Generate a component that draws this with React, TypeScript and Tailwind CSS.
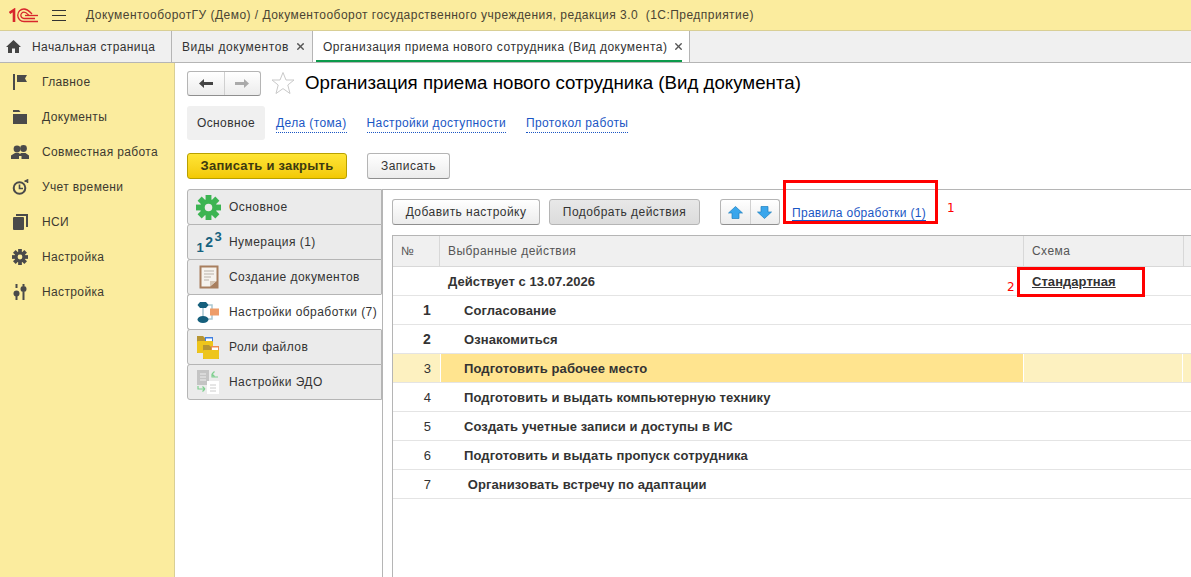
import { X } from 'lucide-react';

/* ── Icons ── */
function Logo1C() {
  return (
    <svg width="30" height="15" viewBox="0 0 30 15" fill="none" stroke="#d8262c">
      <path d="M0.5 5 L5 2 V14" strokeWidth="2.6" />
      <path d="M29 13.5 H15 A6 6 0 1 1 15 1 C19 1 20.5 3.5 23 6" strokeWidth="1.3" />
      <path d="M26 10.5 H15 A3 3 0 1 1 15 4.2 C17.5 4.2 18.5 6 20 7.5" strokeWidth="1.3" />
      <path d="M16 7.5 H29" strokeWidth="1.3" />
    </svg>
  );
}

function HomeIcon() {
  return (
    <svg width="15" height="13" viewBox="0 0 15 13" fill="#444">
      <path d="M7.5 0 L15 7 H13 V13 H9 V8.5 H6 V13 H2 V7 H0 Z" />
    </svg>
  );
}

function FlagIcon() {
  return (
    <svg width="16" height="16" viewBox="0 0 16 16" fill="#4a4a4a">
      <rect x="1" y="0" width="2" height="16" />
      <path d="M5 1 H15 L13 4.5 L15 8 H5 Z" />
    </svg>
  );
}

function FolderIcon() {
  return (
    <svg width="16" height="14" viewBox="0 0 16 14" fill="#4a4a4a">
      <path d="M1 0 H7 L8.5 2 H1 Z" />
      <path d="M1 4 H15 V14 H1 Z" />
    </svg>
  );
}

function PeopleIcon() {
  return (
    <svg width="18" height="14" viewBox="0 0 18 14" fill="#4a4a4a">
      <circle cx="6" cy="4" r="3.4" />
      <circle cx="12.5" cy="3.5" r="3.4" />
      <path d="M0 14 V10.5 L4 8 H8 L9 9 L10 8 H14.5 L18 10.5 V14 H10.5 V11 H8 V14 Z" />
    </svg>
  );
}

function TimerIcon() {
  return (
    <svg width="17" height="16" viewBox="0 0 17 16" fill="none" stroke="#4a4a4a">
      <circle cx="7.5" cy="9" r="5.8" strokeWidth="2" />
      <path d="M7.5 5.5 V9.5 H11" strokeWidth="1.6" />
      <path d="M12.5 2.5 L15.5 1 L15.5 4" strokeWidth="1.6" />
    </svg>
  );
}

function PagesIcon() {
  return (
    <svg width="15" height="16" viewBox="0 0 15 16" fill="#4a4a4a">
      <path d="M3 0 H15 V13 H13 V2 H3 Z" />
      <rect x="0" y="3" width="11" height="13" rx="1" />
    </svg>
  );
}

function GearIcon({ color = '#4a4a4a', hole = '#fbec9e', size = 16 }: { color?: string; hole?: string; size?: number }) {
  const teeth = [0, 45, 90, 135, 180, 225, 270, 315];
  return (
    <svg width={size} height={size} viewBox="0 0 24 24">
      {teeth.map((a) => (
        <rect key={a} x="9.2" y="0" width="5.6" height="7" fill={color} transform={`rotate(${a} 12 12)`} />
      ))}
      <circle cx="12" cy="12" r="8" fill={color} />
      <circle cx="12" cy="12" r="3.6" fill={hole} />
    </svg>
  );
}

function SlidersIcon() {
  return (
    <svg width="14" height="16" viewBox="0 0 14 16" fill="#4a4a4a">
      <rect x="2.5" y="0" width="2" height="4" />
      <circle cx="3.5" cy="9.5" r="3" />
      <rect x="2.5" y="12" width="2" height="4" />
      <rect x="9.5" y="0" width="2" height="2" />
      <circle cx="10.5" cy="5" r="3" />
      <rect x="9.5" y="8" width="2" height="8" />
    </svg>
  );
}

function NumberingIcon() {
  return (
    <span className="flex h-[24px] w-[24px] items-end font-['Liberation_Sans',sans-serif] font-bold leading-none text-[#17627f]">
      <span className="mr-[1px] text-[13px]">1</span>
      <span className="mb-[5px] mr-[1px] text-[14px]">2</span>
      <span className="mb-[11px] text-[13px]">3</span>
    </span>
  );
}

function DocIcon() {
  return (
    <svg width="20" height="24" viewBox="0 0 20 24">
      <rect x="0.5" y="0.5" width="19" height="23" fill="#a87f5f" />
      <path d="M2.5 2.5 H17.5 V16 L11 21.5 H2.5 Z" fill="#f6f3ee" />
      <path d="M11 21.5 L17.5 16 H11 Z" fill="#d4c5b5" />
      <path d="M5 6 H15 M5 9 H15 M5 12 H12 M5 15 H10" stroke="#b9b2a9" strokeWidth="1" />
    </svg>
  );
}

function FlowIcon() {
  return (
    <svg width="24" height="24" viewBox="0 0 24 24">
      <path d="M6 5 V19 M6 5 H15 V9 M6 19 H15 V15" stroke="#a9c8d2" strokeWidth="1.5" fill="none" />
      <path d="M0.5 5 L3 2 H9 L11.5 5 L9 8 H3 Z" fill="#155f7c" />
      <ellipse cx="6" cy="19.5" rx="5.5" ry="3.5" fill="#155f7c" />
      <rect x="13" y="8.5" width="9" height="7" fill="#ee9c68" />
    </svg>
  );
}

function FoldersIcon() {
  return (
    <svg width="24" height="24" viewBox="0 0 24 24">
      <path d="M0 1 H6 L8 3 H16 V18 H0 Z" fill="#b69532" />
      <rect x="8" y="2" width="8" height="5" fill="#3f7fe0" />
      <rect x="9" y="3.5" width="6" height="4" fill="#fff" />
      <rect x="0" y="6" width="16" height="12" rx="1" fill="#eec51c" />
      <path d="M6 10 H12 L14 12 H22 V24 H6 Z" fill="#b69532" />
      <rect x="14" y="11" width="8" height="5" fill="#ee8c50" />
      <rect x="15" y="12.5" width="6" height="4" fill="#fff" />
      <rect x="6" y="15" width="16" height="9" rx="1" fill="#eec51c" />
    </svg>
  );
}

function EdoIcon() {
  return (
    <svg width="24" height="24" viewBox="0 0 24 24">
      <rect x="0" y="0" width="12" height="15" fill="#c4c4c4" />
      <path d="M3 4 H9 M3 7 H9 M3 10 H9" stroke="#eee" />
      <rect x="10" y="11" width="12" height="13" fill="#fff" />
      <path d="M13 15 H19 M13 18 H19 M13 21 H19" stroke="#ccc" />
      <path d="M21 7 H15 V4 M15 4 L17.5 1.5 M15 4 L17.5 6.5" stroke="#7fcf8f" strokeWidth="1.2" fill="none" />
      <path d="M1 16 V19 H8 M8 19 L5.5 16.5 M8 19 L5.5 21.5" stroke="#7fcf8f" strokeWidth="1.2" fill="none" />
    </svg>
  );
}

function UpDownArrow({ down }: { down?: boolean }) {
  return (
    <svg width="15" height="13" viewBox="0 0 15 13" className={down ? 'rotate-180' : ''}>
      <path d="M7.5 0.5 L14.5 7 H11 V12.5 H4 V7 H0.5 Z" fill="#3aa6ec" stroke="#1c7fbe" strokeWidth="0.7" />
    </svg>
  );
}

function FatArrow({ color, flip }: { color: string; flip?: boolean }) {
  return (
    <svg width="14" height="9" viewBox="0 0 14 9" fill={color} className={flip ? 'rotate-180' : ''}>
      <path d="M0 4.5 L5 0 V3 H14 V6 H5 V9 Z" />
    </svg>
  );
}

function StarIcon() {
  return (
    <svg width="24" height="24" viewBox="0 0 24 24" fill="none" stroke="#c9c9c9" strokeWidth="1">
      <path d="M12 1.5 L15 9 H23 L16.8 14 L19 22.5 L12 17.6 L5 22.5 L7.2 14 L1 9 H9 Z" />
    </svg>
  );
}

/* ── Data ── */
const NAV_ITEMS = [
  { label: 'Главное', icon: <FlagIcon /> },
  { label: 'Документы', icon: <FolderIcon /> },
  { label: 'Совместная работа', icon: <PeopleIcon /> },
  { label: 'Учет времени', icon: <TimerIcon /> },
  { label: 'НСИ', icon: <PagesIcon /> },
  { label: 'Настройка', icon: <GearIcon /> },
  { label: 'Настройка', icon: <SlidersIcon /> },
];

const SIDE_TABS = [
  { label: 'Основное', icon: <GearIcon color="#3cb452" hole="#ebebeb" size={25} /> },
  { label: 'Нумерация (1)', icon: <NumberingIcon /> },
  { label: 'Создание документов', icon: <DocIcon /> },
  { label: 'Настройки обработки (7)', icon: <FlowIcon />, active: true },
  { label: 'Роли файлов', icon: <FoldersIcon /> },
  { label: 'Настройки ЭДО', icon: <EdoIcon /> },
];

const ROWS = [
  { n: '1', text: 'Согласование', strong: true },
  { n: '2', text: 'Ознакомиться', strong: true },
  { n: '3', text: 'Подготовить рабочее место', selected: true },
  { n: '4', text: 'Подготовить и выдать компьютерную технику' },
  { n: '5', text: 'Создать учетные записи и доступы в ИС' },
  { n: '6', text: 'Подготовить и выдать пропуск сотрудника' },
  { n: '7', text: ' Организовать встречу по адаптации' },
];

const BUTTON = 'flex items-center justify-center rounded-[3px] border border-[#b5b5b5] border-b-[#8f8f8f] bg-gradient-to-b from-white to-[#ececec] text-[#333]';

export default function App() {
  return (
    <div className="relative flex h-[577px] w-[1191px] flex-col overflow-hidden bg-white font-['Liberation_Sans',Arial,sans-serif] text-[12px] tracking-[0.45px] text-[#333]">
      {/* Title bar */}
      <div className="flex h-[31px] shrink-0 items-center border-b border-[#d9cf95] bg-[#fbec9e] pl-[9px]">
        <Logo1C />
        <div className="ml-[13px] flex w-[14px] flex-col gap-[4px]">
          <span className="h-px bg-[#333]" />
          <span className="h-px bg-[#333]" />
          <span className="h-px bg-[#333]" />
        </div>
        <span className="ml-[20px] whitespace-pre tracking-[0.47px] text-[#4a4433]">
          ДокументооборотГУ (Демо) / Документооборот государственного учреждения, редакция 3.0  (1С:Предприятие)
        </span>
      </div>

      {/* Open tabs */}
      <div className="flex h-[32px] shrink-0 border-b border-[#b5b5b5] bg-[#f0f0f0]">
        <div className="flex w-[172px] items-center border-r border-[#b5b5b5] pl-[6px] tracking-[0.4px]">
          <HomeIcon />
          <span className="ml-[11px]">Начальная страница</span>
        </div>
        <div className="flex w-[141px] items-center border-r border-[#b5b5b5] pl-[10px] tracking-[0.55px]">
          <span>Виды документов</span>
          <X size={11} strokeWidth={3} className="ml-[6px] text-[#555]" />
        </div>
        <div className="relative flex w-[377px] items-center border-r border-[#b5b5b5] bg-white pl-[10px] tracking-[0.5px]">
          <span>Организация приема нового сотрудника (Вид документа)</span>
          <X size={11} strokeWidth={3} className="ml-[6px] text-[#555]" />
          <span className="absolute bottom-0 left-[3px] h-[2px] w-[366px] bg-[#0c9a4b]" />
        </div>
      </div>

      <div className="flex min-h-0 flex-1">
        {/* Sidebar */}
        <div className="flex w-[175px] shrink-0 flex-col border-r border-[#d9cf95] bg-[#fbec9e] pt-px">
          {NAV_ITEMS.map((item, i) => (
            <div key={i} className="flex h-[35px] items-center tracking-[0.37px] text-[#3d3a30]">
              <span className="flex w-[42px] justify-center pr-[2px]">{item.icon}</span>
              <span>{item.label}</span>
            </div>
          ))}
        </div>

        {/* Form */}
        <div className="flex min-w-0 flex-1 flex-col">
          <div className="mb-[3px] flex h-[40px] shrink-0 items-center pl-[12px]">
            <div className={`${BUTTON} h-[25px] w-[74px]`}>
              <span className="flex h-full w-[37px] items-center justify-center border-r border-[#d0d0d0]">
                <FatArrow color="#444" />
              </span>
              <span className="flex h-full w-[36px] items-center justify-center">
                <FatArrow color="#aaa" flip />
              </span>
            </div>
            <span className="ml-[10px]"><StarIcon /></span>
            <span className="ml-[10px] text-[18.7px] tracking-normal text-black">Организация приема нового сотрудника (Вид документа)</span>
          </div>

          <div className="flex h-[34px] shrink-0 items-center pl-[12px] tracking-[0.38px]">
            <span className="flex h-[34px] w-[78px] items-center justify-center rounded-[3px] bg-[#f0f0f0]">Основное</span>
            <span className="ml-[11px] border-b border-dotted border-[#1a56c4] text-[#1a56c4]">Дела (тома)</span>
            <span className="ml-[20px] border-b border-dotted border-[#1a56c4] text-[#1a56c4]">Настройки доступности</span>
            <span className="ml-[20px] border-b border-dotted border-[#1a56c4] text-[#1a56c4]">Протокол работы</span>
          </div>

          <div className="mt-[13px] flex h-[26px] shrink-0 items-center pl-[12px]">
            <div className="flex h-[26px] w-[160px] items-center justify-center rounded-[3px] border border-[#b8a000] bg-gradient-to-b from-[#ffe534] to-[#f3c900] text-[13px] font-bold tracking-[0.22px] text-[#3d3a10]">
              Записать и закрыть
            </div>
            <div className={`${BUTTON} ml-[20px] h-[26px] w-[83px]`}>Записать</div>
          </div>

          <div className="mt-[10px] flex min-h-0 flex-1 pl-[12px]">
            {/* Vertical tabs */}
            <div className="w-[195px] shrink-0">
              {SIDE_TABS.map((tab) => (
                <div
                  key={tab.label}
                  className={`-mb-px flex h-[36px] items-center rounded-l-[3px] border border-[#b5b5b5] ${
                    tab.active ? 'relative z-10 border-r-white bg-white' : 'bg-[#ebebeb]'
                  }`}
                >
                  <span className="flex w-[41px] shrink-0 justify-center">{tab.icon}</span>
                  <span className="whitespace-nowrap">{tab.label}</span>
                </div>
              ))}
            </div>

            {/* Tab body */}
            <div className="min-w-0 flex-1 border-l border-t border-[#b5b5b5] pl-[9px] pt-[9px]">
              <div className="flex h-[26px] items-center">
                <div className={`${BUTTON} h-[26px] w-[148px]`}>Добавить настройку</div>
                <div className="ml-[9px] flex h-[26px] w-[151px] items-center justify-center rounded-[3px] border border-[#b5b5b5] bg-gradient-to-b from-[#e8e8e8] to-[#dcdcdc]">
                  Подобрать действия
                </div>
                <div className={`${BUTTON} ml-[20px] h-[26px] w-[60px]`}>
                  <span className="flex h-full w-[30px] items-center justify-center border-r border-[#d0d0d0]"><UpDownArrow /></span>
                  <span className="flex h-full w-[29px] items-center justify-center"><UpDownArrow down /></span>
                </div>
                <span className="ml-[12px] mt-[3px] border-b border-[#1a56c4] leading-[13px] tracking-[0.3px] text-[#1a56c4]">Правила обработки (1)</span>
              </div>

              {/* Table */}
              <div className="mt-[10px] h-[400px] border-l border-t border-[#b5b5b5]">
                <div className="flex h-[31px] border-b border-[#d8d8d8] bg-[#f0f0f0] text-[#555]">
                  <div className="flex w-[47px] items-center border-r border-[#d8d8d8] pl-[8px]">№</div>
                  <div className="flex w-[584px] items-center border-r border-[#d8d8d8] pl-[8px]">Выбранные действия</div>
                  <div className="flex w-[160px] items-center border-r border-[#d8d8d8] pl-[8px]">Схема</div>
                </div>
                <div className="flex h-[29px] items-center border-b border-[#e4e4e4] pt-px text-[13px] font-bold tracking-[0.05px]">
                  <div className="w-[47px]" />
                  <div className="w-[584px] pl-[8px]">Действует с 13.07.2026</div>
                  <div className="pl-[8px] underline">Стандартная</div>
                </div>
                {ROWS.map((row) => (
                  <div
                    key={row.n}
                    className={`flex h-[29px] border-b border-[#e4e4e4] text-[13px] font-bold tracking-[0.1px] ${row.selected ? 'bg-[#fdf1c0]' : ''}`}
                  >
                    <div className={`flex w-[47px] items-center justify-end pr-[9px] pt-px ${row.strong ? 'text-[14px] font-bold' : 'font-normal'}`}>{row.n}</div>
                    <div
                      className={`flex w-[584px] items-center whitespace-pre pt-px ${
                        row.selected ? 'border-x border-white bg-[#ffe48f] pl-[23px]' : 'pl-[24px]'
                      }`}
                    >
                      {row.text}
                    </div>
                    {row.selected && <div className="w-[159px] border-r border-white" />}
                  </div>
                ))}
              </div>
            </div>
          </div>
        </div>
      </div>

      {/* Red annotations */}
      <div className="absolute left-[783px] top-[180px] h-[44px] w-[155px] border-[3px] border-[#ff0000]" />
      <span className="absolute left-[947px] top-[199px] font-['DejaVu_Sans',sans-serif] text-[12px] tracking-normal text-[#ff0000]">1</span>
      <div className="absolute left-[1017px] top-[267px] h-[30px] w-[128px] border-[3px] border-[#ff0000]" />
      <span className="absolute left-[1007px] top-[278px] font-['DejaVu_Sans',sans-serif] text-[12px] tracking-normal text-[#ff0000]">2</span>
    </div>
  );
}
